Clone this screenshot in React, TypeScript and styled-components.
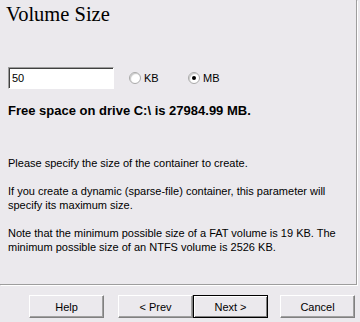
import styled, { createGlobalStyle } from 'styled-components';

const GlobalStyle = createGlobalStyle`
  html, body {
    margin: 0;
    padding: 0;
    background: #ebe9ed;
  }
`;

const App = () => {
  return (
    <>
      <GlobalStyle />
      <Window>
        <Panel>
          <Title>Volume Size</Title>
          <SizeRow>
            <SizeInput defaultValue="50" />
            <RadioLabel>
              <Radio />
              KB
            </RadioLabel>
            <RadioLabel>
              <Radio checked />
              MB
            </RadioLabel>
          </SizeRow>
          <FreeSpace>Free space on drive C:\ is 27984.99 MB.</FreeSpace>
          <Info>
            <p>Please specify the size of the container to create.</p>
            <p>
              If you create a dynamic (sparse-file) container, this parameter will
              <br />
              specify its maximum size.
            </p>
            <p>
              Note that the minimum possible size of a FAT volume is 19 KB. The
              <br />
              minimum possible size of an NTFS volume is 2526 KB.
            </p>
          </Info>
        </Panel>
        <Footer>
          <Button>Help</Button>
          <NavGroup>
            <Button>&lt; Prev</Button>
            <Button isDefault>Next &gt;</Button>
          </NavGroup>
          <Button>Cancel</Button>
        </Footer>
      </Window>
    </>
  );
};

export default App;

const Window = styled.div`
  width: 360px;
  height: 322px;
  display: flex;
  flex-direction: column;
  font-family: 'Liberation Sans', Arial, sans-serif;
  font-size: 11px;
  color: #000;
`;

const Panel = styled.div`
  box-sizing: border-box;
  width: 357px;
  height: 285px;
  border-right: 1px solid #9d9d9d;
  border-bottom: 1px solid #9d9d9d;
  box-shadow: 1px 1px 0 #ffffff;
  padding: 0 8px;
`;

const Title = styled.h1`
  margin: 0 0 0 -2px;
  padding-top: 2px;
  font-family: 'Liberation Serif', 'Times New Roman', serif;
  font-weight: normal;
  font-size: 20.5px;
  line-height: 24px;
`;

const SizeRow = styled.div`
  display: flex;
  align-items: center;
  margin-top: 41px;
  height: 22px;
`;

const SizeInput = styled.input`
  box-sizing: border-box;
  width: 106px;
  height: 22px;
  margin: 0;
  padding: 0 3px;
  border: 1px solid;
  border-color: #9d9d9d #ffffff #ffffff #9d9d9d;
  box-shadow: inset 1px 1px 0 #404040;
  background: #fff;
  font-family: inherit;
  font-size: 11px;
  outline: none;
`;

const RadioLabel = styled.label`
  display: flex;
  align-items: center;
  gap: 3px;
  margin-left: 15px;
  width: 44px;
`;

const Radio = styled.span<{ checked?: boolean }>`
  position: relative;
  box-sizing: border-box;
  width: 12px;
  height: 12px;
  border-radius: 50%;
  border: 1px solid #a9a9a9;
  background: #fff;
  box-shadow: inset 1px 1px 1px #c8c8c8;

  &::after {
    content: '';
    display: ${(p) => (p.checked ? 'block' : 'none')};
    position: absolute;
    left: 3px;
    top: 3px;
    width: 4px;
    height: 4px;
    border-radius: 50%;
    background: #000;
  }
`;

const FreeSpace = styled.div`
  margin-top: 14px;
  font-weight: bold;
  font-size: 13px;
  line-height: 15px;
`;

const Info = styled.div`
  margin-top: 38px;
  line-height: 14px;

  p {
    margin: 0 0 14px 0;
  }
`;

const Footer = styled.div`
  display: flex;
  padding: 10px 0 0 29px;
`;

const NavGroup = styled.div`
  display: flex;
  margin-left: 14px;
  margin-right: 12px;
`;

const Button = styled.button<{ isDefault?: boolean }>`
  box-sizing: border-box;
  width: 75px;
  height: 23px;
  margin: 0;
  padding: 0;
  background: #ebe9ed;
  font-family: inherit;
  font-size: 11px;
  color: #000;
  border: 1px solid;
  border-color: ${(p) => (p.isDefault ? '#000' : '#fff #808080 #808080 #fff')};
  box-shadow: ${(p) =>
    p.isDefault
      ? 'inset 1px 1px 0 #fff, inset -1px -1px 0 #808080'
      : 'inset -1px -1px 0 #a0a0a0'};
`;
